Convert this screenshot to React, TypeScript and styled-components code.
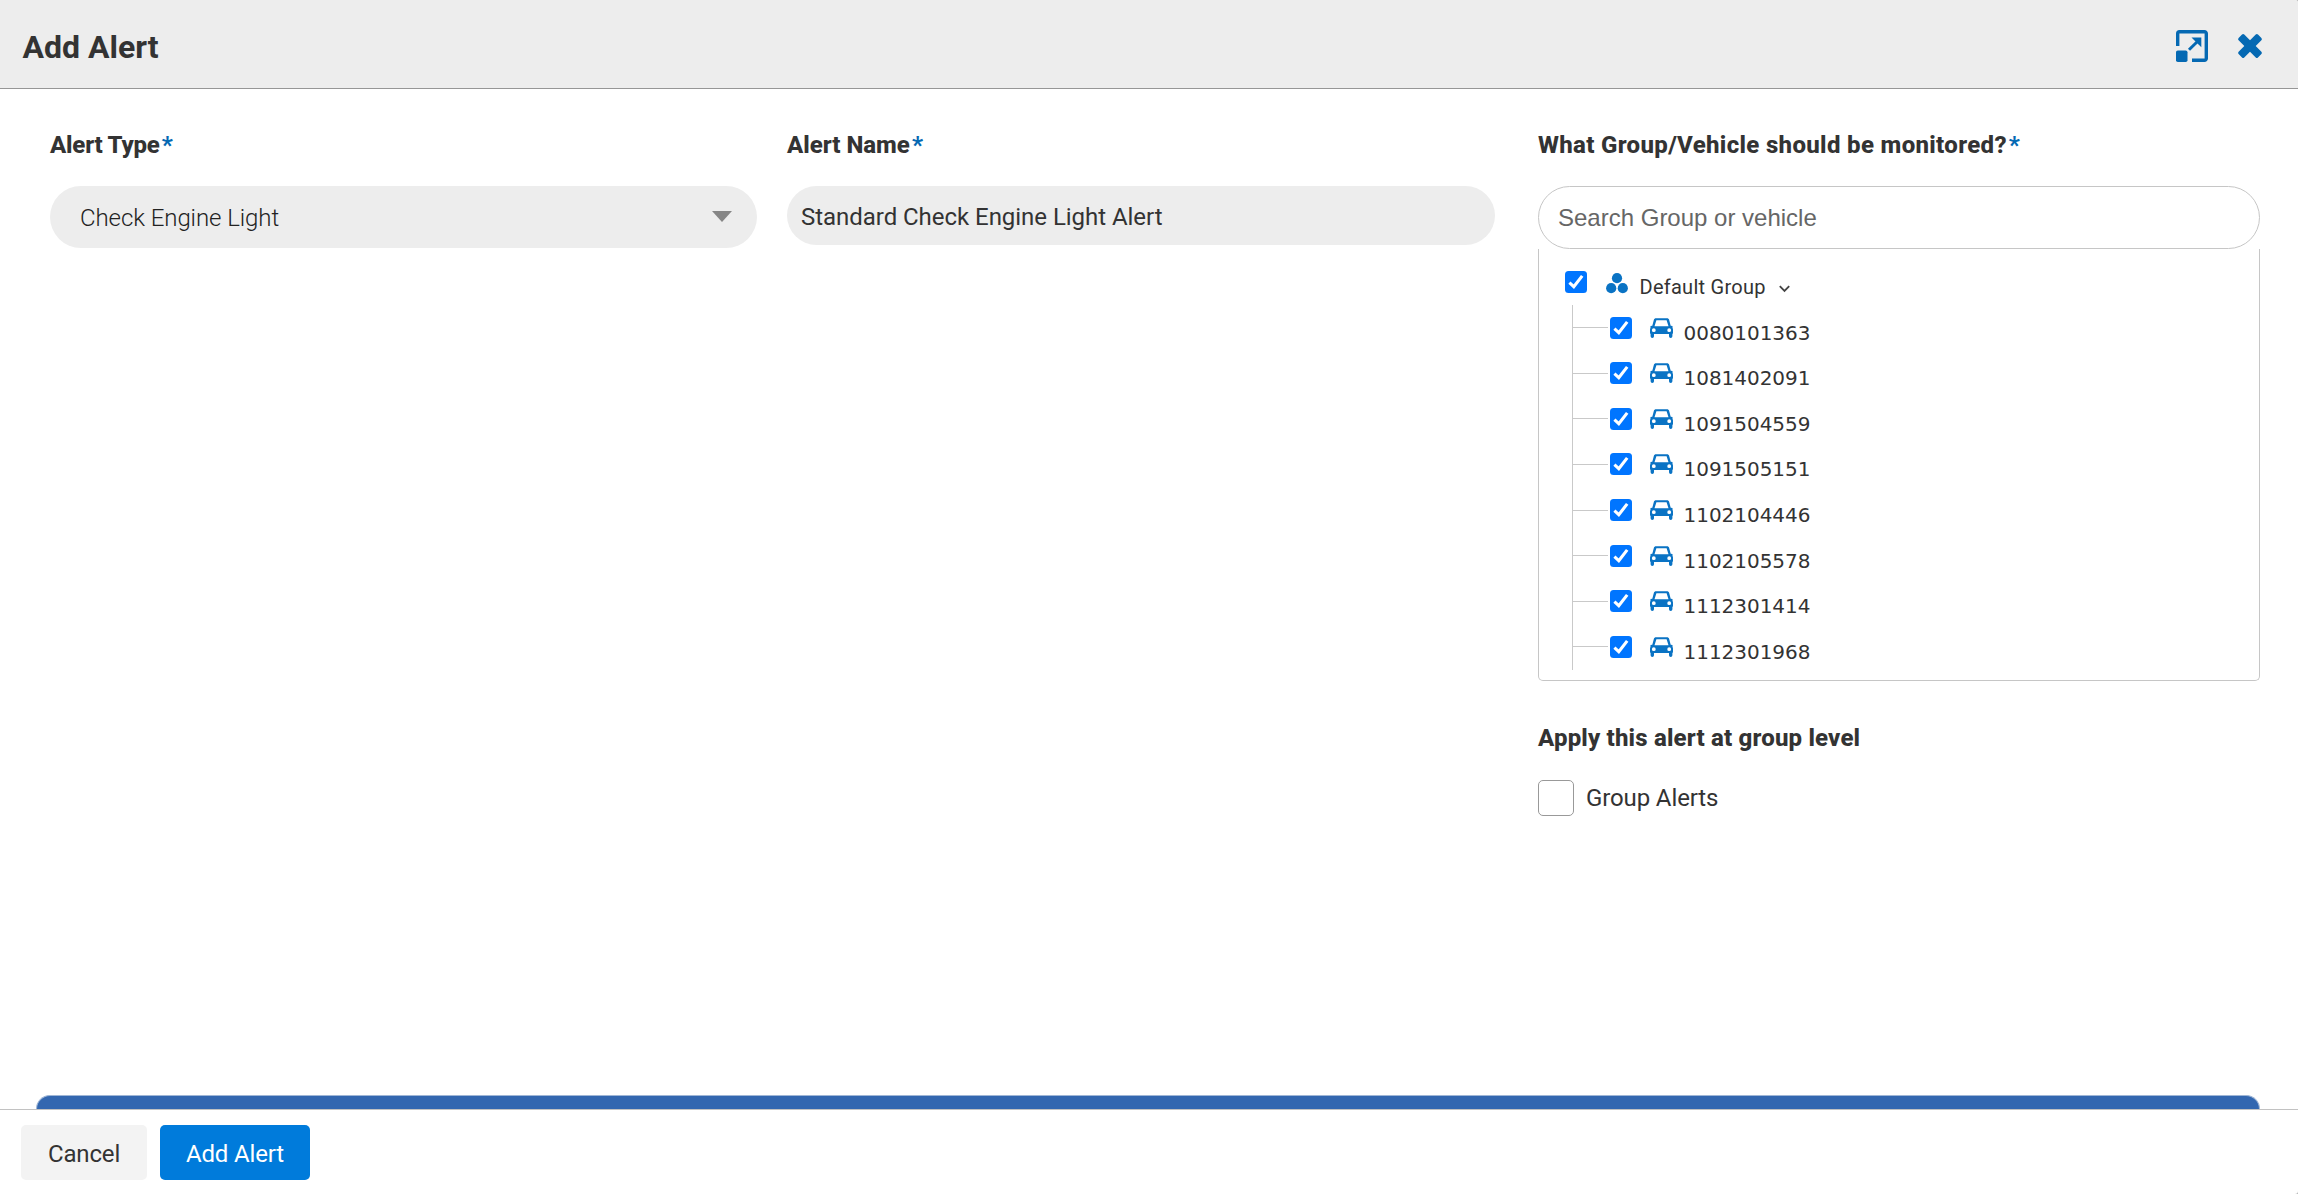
import React from "react";
import styled, { createGlobalStyle } from "styled-components";

const BLUE = "#0569b3";
const INK = "#333333";

const GlobalStyle = createGlobalStyle`
  *, *::before, *::after { box-sizing: border-box; }
  body { margin: 0; background: #b5b5b5; }
`;

const Dialog = styled.div`
  display: flex;
  flex-direction: column;
  height: 100vh;
  overflow: hidden;
  border-radius: 0 3px 3px 0;
  background: #fff;
  color: ${INK};
  font-family: Roboto, "Liberation Sans", sans-serif;
  font-size: 24px;
  line-height: 30px;
`;

const Header = styled.header`
  display: flex;
  flex: none;
  align-items: center;
  justify-content: space-between;
  height: 89px;
  padding: 5px 35px 0 22.500px;
  border-bottom: 1px solid #969696;
  background: #ededed;
`;

const Title = styled.h1`
  margin: 0;
  font-size: 32px;
  line-height: 38px;
  font-weight: 700;
`;

const HeaderActions = styled.div`
  display: flex;
  align-items: center;
  gap: 29px;
  margin-top: -1px;
`;

const IconButton = styled.button`
  display: flex;
  padding: 0;
  border: 0;
  background: none;
  color: ${BLUE};
`;

const Content = styled.main`
  display: flex;
  flex: 1;
  flex-direction: column;
  min-height: 0;
  padding: 41px 38px 0 36px;
`;

const FormGrid = styled.div`
  display: grid;
  grid-template-columns: 707px 708px 722px;
  column-gap: 30px;
  padding-left: 14px;

  & > :last-child { margin-left: 13px; margin-right: -13px; }
`;

const Field = styled.section`
  display: flex;
  flex-direction: column;
`;

const Label = styled.div<{ $tracking?: number }>`
  display: flex;
  gap: 2px;
  margin-bottom: 26px;
  font-weight: 800;
  letter-spacing: ${(p) => p.$tracking ?? 0}px;
  white-space: nowrap;
`;

const Required = styled.span`
  color: ${BLUE};
`;

const Select = styled.div`
  display: flex;
  align-items: center;
  justify-content: space-between;
  height: 62px;
  padding: 1px 25px 0 30px;
  border-radius: 31px;
  background: #ededed;
  color: #222;
  font-weight: 300;
  letter-spacing: -0.08px;
`;

const Caret = styled.span`
  width: 0;
  height: 0;
  margin-top: -3px;
  border: 10px solid transparent;
  border-top: 11px solid #868686;
  border-bottom: 0;
`;

const TextInput = styled.input`
  height: 59px;
  padding: 2px 14px 0;
  border: 0;
  border-radius: 30px;
  outline: 0;
  background: #ededed;
  color: ${INK};
  font: inherit;
  letter-spacing: -0.04px;
`;

const SearchInput = styled.input`
  height: 63px;
  padding: 0 19px;
  border: 1px solid #c6c6c6;
  border-radius: 32px;
  outline: 0;
  background: #fff;
  font: 24px/30px "Liberation Sans", Arial, sans-serif;

  &::placeholder { color: #666; opacity: 1; }
`;

const TreePanel = styled.div`
  height: 432px;
  padding: 10px 26px 0;
  border: 1px solid #c6c6c6;
  border-top: 0;
  border-radius: 0 0 5px 5px;
`;

const GroupRow = styled.div`
  display: flex;
  align-items: center;
  height: 46px;
`;

const GroupIcon = styled.svg`
  margin: 2px 12px 0 18.500px;
`;

const GroupName = styled.span`
  margin: 10px 13.500px 0 0;
  font-size: 20px;
  letter-spacing: 0.26px;
`;

const ChevronIcon = styled.svg`
  margin-top: 13px;
`;

const VehicleList = styled.ul`
  margin: 0 0 0 7px;
  padding: 0;
  border-left: 1px solid #c9c9c9;
  list-style: none;
`;

const VehicleRow = styled.li`
  display: flex;
  align-items: center;
  height: 45.57px;

  &::before {
    content: "";
    width: 35px;
    height: 1px;
    margin-right: 2px;
    background: #c9c9c9;
  }
`;

const CarIcon = styled.svg`
  margin: 0 10.500px 0 18px;
`;

const VehicleId = styled.span`
  margin-top: 10px;
  font-family: "DejaVu Sans", sans-serif;
  font-size: 20px;
  letter-spacing: -0.03px;
`;

const Tick = styled.span`
  display: flex;
  flex: none;
  width: 22px;
  height: 22px;
  border-radius: 3.5px;
  background: #0075ff;
`;

const GroupLevel = styled.section`
  display: flex;
  flex-direction: column;
  margin-top: 42px;
`;

const GroupLevelTitle = styled.h2`
  margin: 0 0 27px;
  font-size: 24px;
  font-weight: 800;
  letter-spacing: 0.18px;
`;

const CheckLabel = styled.label`
  display: flex;
  align-items: center;
  gap: 12px;
  letter-spacing: -0.12px;
`;

const EmptyBox = styled.span`
  width: 36px;
  height: 36px;
  border: 1px solid #999;
  border-radius: 5px;
  background: #fff;
`;

const SectionBar = styled.div`
  height: 14px;
  margin-top: auto;
  border: 1px solid #9fb6d6;
  border-bottom: 0;
  border-radius: 14px 14px 0 0;
  background: #3367b0;
`;

const Footer = styled.footer`
  display: flex;
  flex: none;
  gap: 13px;
  height: 85px;
  padding: 15px 21px;
  border-top: 1px solid #c2c2c2;
`;

const Button = styled.button<{ $primary?: boolean }>`
  width: ${(p) => (p.$primary ? 150 : 126)}px;
  height: 55px;
  padding: 2px 0 0;
  border: 0;
  border-radius: 5px;
  background: ${(p) => (p.$primary ? "#007bdb" : "#f3f3f3")};
  color: ${(p) => (p.$primary ? "#fff" : INK)};
  font: inherit;
  letter-spacing: -0.15px;
`;

const vehicles = [
  "0080101363",
  "1081402091",
  "1091504559",
  "1091505151",
  "1102104446",
  "1102105578",
  "1112301414",
  "1112301968",
];

const Checked = () => (
  <Tick>
    <svg width="22" height="22" viewBox="0 0 22 22" fill="none">
      <path d="M4.4 11.7 8.8 15.7 17.2 4.9" stroke="#fff" strokeWidth="3.1" />
    </svg>
  </Tick>
);

const Car = () => (
  <CarIcon width="23" height="20" viewBox="0 0 23 20">
    <path
      fillRule="evenodd"
      fill="#0a73c4"
      d="M6 .3h11c1 0 1.800.5 2.100 1.500L20.700 7.700 22.500 8v1.500L23 11.500V15.200l-.6.8v2.300a1.500 1.500 0 0 1-3.400 0V16H4v2.300a1.500 1.500 0 0 1-3.400 0V16L0 15.200V11.500L.5 9.500V8L2.300 7.700 3.900 1.800C4.200.8 5 .3 6 .3ZM6.400 2.300 4.500 8.300h14L16.600 2.300ZM3.800 10.300a1.900 1.900 0 1 0 0 3.800 1.900 1.900 0 0 0 0-3.800ZM19.200 10.300a1.900 1.900 0 1 0 0 3.800 1.900 1.900 0 0 0 0-3.800Z"
    />
  </CarIcon>
);

export default function App() {
  return (
    <>
      <GlobalStyle />
      <Dialog>
        <Header>
          <Title>Add Alert</Title>
          <HeaderActions>
            <IconButton aria-label="Expand">
              <svg width="32" height="32" viewBox="0 0 32 32" fill="none">
                <path
                  d="M1.700 16V3.500a1.800 1.800 0 0 1 1.800-1.800H28.500a1.800 1.800 0 0 1 1.800 1.800V28.500a1.800 1.800 0 0 1-1.800 1.800H16"
                  stroke="currentColor"
                  strokeWidth="3.400"
                />
                <rect y="20.500" width="11.500" height="11.500" rx="1.800" fill="currentColor" />
                <path d="M13 19.800 22 11" stroke="currentColor" strokeWidth="3" />
                <path d="M15.500 7.500H25.300V17.300Z" fill="currentColor" />
              </svg>
            </IconButton>
            <IconButton aria-label="Close">
              <svg width="26" height="26" viewBox="0 0 26 26" fill="currentColor">
                <g transform="rotate(45 13 13)">
                  <rect x="-.7" y="9" width="27.400" height="8" rx="1.600" />
                  <rect x="9" y="-.7" width="8" height="27.400" rx="1.600" />
                </g>
              </svg>
            </IconButton>
          </HeaderActions>
        </Header>

        <Content>
          <FormGrid>
            <Field>
              <Label $tracking={-0.2}>
                Alert Type<Required>*</Required>
              </Label>
              <Select>
                Check Engine Light
                <Caret />
              </Select>
            </Field>

            <Field>
              <Label>
                Alert Name<Required>*</Required>
              </Label>
              <TextInput defaultValue="Standard Check Engine Light Alert" />
            </Field>

            <Field>
              <Label $tracking={0.33}>
                What Group/Vehicle should be monitored?<Required>*</Required>
              </Label>
              <SearchInput placeholder="Search Group or vehicle" />
              <TreePanel>
                <GroupRow>
                  <Checked />
                  <GroupIcon width="22" height="21" viewBox="0 0 22 21" fill="#0a73c4">
                    <circle cx="11" cy="5.200" r="5.100" />
                    <circle cx="5.200" cy="15.200" r="5.100" />
                    <circle cx="16.800" cy="15.200" r="5.100" />
                  </GroupIcon>
                  <GroupName>Default Group</GroupName>
                  <ChevronIcon width="11" height="8" viewBox="0 0 11 8" fill="none">
                    <path d="M.8 1.200 5.500 6 10.200 1.200" stroke="#444" strokeWidth="1.800" />
                  </ChevronIcon>
                </GroupRow>
                <VehicleList>
                  {vehicles.map((id) => (
                    <VehicleRow key={id}>
                      <Checked />
                      <Car />
                      <VehicleId>{id}</VehicleId>
                    </VehicleRow>
                  ))}
                </VehicleList>
              </TreePanel>

              <GroupLevel>
                <GroupLevelTitle>Apply this alert at group level</GroupLevelTitle>
                <CheckLabel>
                  <EmptyBox />
                  Group Alerts
                </CheckLabel>
              </GroupLevel>
            </Field>
          </FormGrid>
          <SectionBar />
        </Content>

        <Footer>
          <Button>Cancel</Button>
          <Button $primary>Add Alert</Button>
        </Footer>
      </Dialog>
    </>
  );
}
